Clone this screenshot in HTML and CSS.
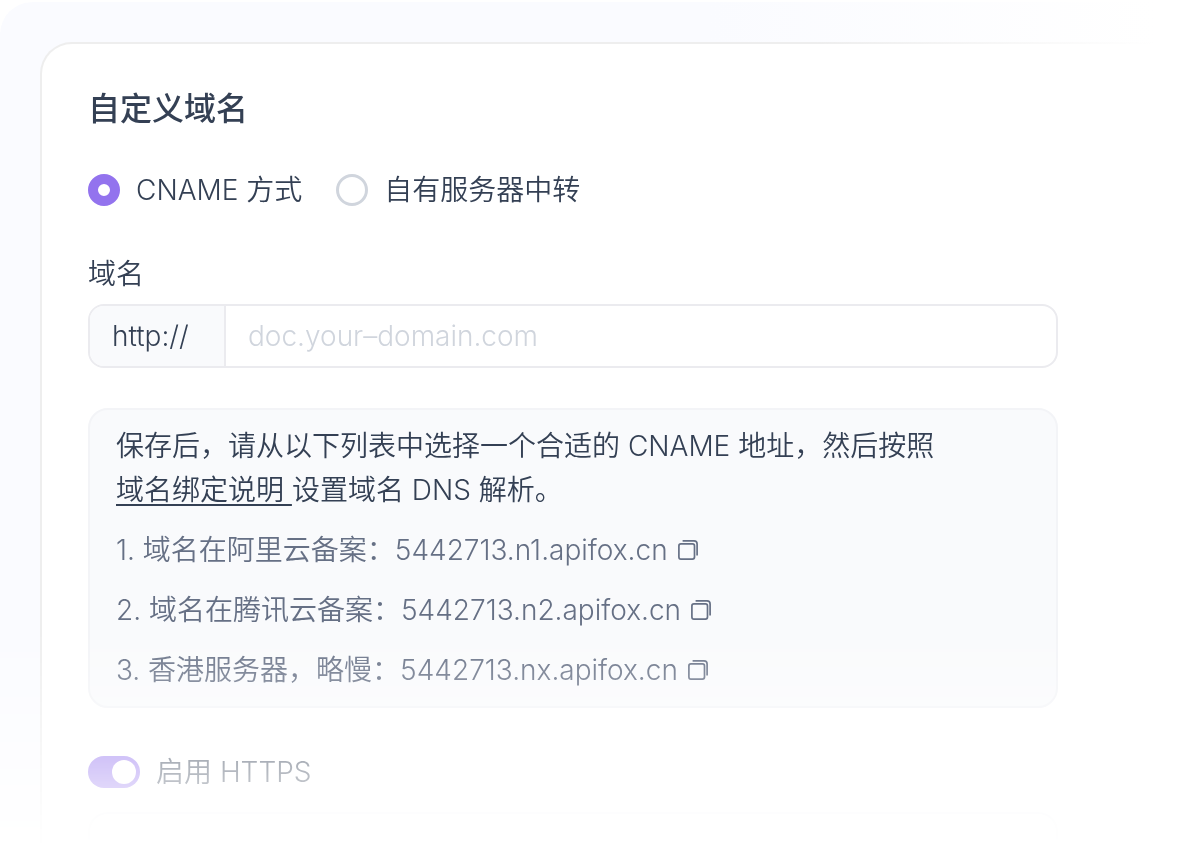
FILE: index.html
```html
<!DOCTYPE html>
<html lang="zh-CN">
<head>
  <meta charset="UTF-8">
  <meta name="viewport" content="width=device-width, initial-scale=1.0">
  <title>自定义域名</title>
  <link rel="stylesheet" href="styles.css">
</head>
<body>
  <main class="panel">
    <form class="card">
      <h2 class="title">自定义域名</h2>

      <div class="radio-group">
        <label class="radio-label"><input class="radio" type="radio" name="mode" checked>CNAME 方式</label>
        <label class="radio-label"><input class="radio" type="radio" name="mode">自有服务器中转</label>
      </div>

      <label class="field-label" for="domain">域名</label>
      <div class="input-group">
        <span class="prefix">http://</span>
        <input class="domain-input" type="text" id="domain" placeholder="doc.your–domain.com">
      </div>

      <div class="info">
        <p class="info-text">保存后，请从以下列表中选择一个合适的 CNAME 地址，然后按照<br><a class="info-link" href="#">域名绑定说明&nbsp;</a>设置域名 DNS 解析。</p>
        <ol class="address-list">
          <li class="address">
            <span>1. 域名在阿里云备案：5442713.n1.apifox.cn</span>
            <button class="copy" type="button" aria-label="复制">
              <svg width="20" height="20" viewBox="0 0 20 20" fill="none" stroke="currentColor" stroke-width="1.7"><rect x="0.9" y="3.9" width="15.6" height="15.2" rx="2"/><path d="M4.6 0.9H16a3.1 3.1 0 0 1 3.1 3.1v11.4"/></svg>
            </button>
          </li>
          <li class="address">
            <span>2. 域名在腾讯云备案：5442713.n2.apifox.cn</span>
            <button class="copy" type="button" aria-label="复制">
              <svg width="20" height="20" viewBox="0 0 20 20" fill="none" stroke="currentColor" stroke-width="1.7"><rect x="0.9" y="3.9" width="15.6" height="15.2" rx="2"/><path d="M4.6 0.9H16a3.1 3.1 0 0 1 3.1 3.1v11.4"/></svg>
            </button>
          </li>
          <li class="address">
            <span>3. 香港服务器，略慢：5442713.nx.apifox.cn</span>
            <button class="copy" type="button" aria-label="复制">
              <svg width="20" height="20" viewBox="0 0 20 20" fill="none" stroke="currentColor" stroke-width="1.7"><rect x="0.9" y="3.9" width="15.6" height="15.2" rx="2"/><path d="M4.6 0.9H16a3.1 3.1 0 0 1 3.1 3.1v11.4"/></svg>
            </button>
          </li>
        </ol>
      </div>

      <label class="switch-label"><input class="switch" type="checkbox" role="switch" checked>启用 HTTPS</label>

      <div class="next-box"></div>
    </form>
  </main>
</body>
</html>
```
FILE: styles.css
```css
* {
  box-sizing: border-box;
}

body {
  margin: 0;
  background-color: #fff;
  color: #344054;
  font-family: Inter, "Noto Sans CJK SC", sans-serif;
  font-size: 28px;
  font-weight: 350;
  line-height: 40px;
}

/* Fades to white on the right and at the bottom */
.panel {
  display: flex;
  min-height: calc(100vh - 2px);
  margin-top: 2px;
  padding: 40px 0 0 40px;
  border-radius: 32px 0 0 0;
  background: linear-gradient(to right, #fafbff 60%, #fff 98%);
  -webkit-mask-image: linear-gradient(to top, transparent 10px, rgba(0, 0, 0, 0.15) 45px, rgba(0, 0, 0, 0.35) 85px, rgba(0, 0, 0, 0.8) 185px, #000 230px);
  mask-image: linear-gradient(to top, transparent 10px, rgba(0, 0, 0, 0.15) 45px, rgba(0, 0, 0, 0.35) 85px, rgba(0, 0, 0, 0.8) 185px, #000 230px);
}

.card {
  display: flex;
  flex-direction: column;
  flex: 1;
  padding: 40px 122px 0 46px;
  border: 2px solid transparent;
  border-width: 2px 0 0 2px;
  border-radius: 32px 0 0 0;
  background: linear-gradient(#fff, #fff) padding-box, linear-gradient(to right, #eee 68%, #fff 98%) border-box;
}

.title {
  margin: 0;
  font-size: 32px;
  font-weight: 500;
  line-height: 50px;
}

.radio-group {
  display: flex;
  gap: 34px;
  margin-top: 36px;
}

.radio-label,
.switch-label {
  display: flex;
  align-items: center;
  gap: 16px;
}

.radio {
  appearance: none;
  width: 32px;
  height: 32px;
  margin: 0;
  border: 3px solid #d0d5dd;
  border-radius: 50%;
  background-color: #fff;
}

.radio:checked {
  border: 10px solid #9373ee;
}

.field-label {
  margin-top: 44px;
}

.input-group {
  display: flex;
  height: 64px;
  margin-top: 10px;
  border: 2px solid #ebebef;
  border-radius: 16px;
  background-color: #fff;
  overflow: hidden;
}

.prefix {
  min-width: 136px;
  padding: 10px 22px;
  border-right: 2px solid #ebebef;
  background-color: #f9fafc;
}

.domain-input {
  flex: 1;
  min-width: 0;
  padding: 0 22px;
  border: none;
  outline: none;
  background: none;
  color: inherit;
  font: inherit;
}

.domain-input::placeholder {
  color: #d0d5dd;
}

.info {
  margin-top: 40px;
  padding: 14px 26px;
  border: 2px solid #f3f4f7;
  border-radius: 20px;
  background-color: #f9fafc;
  line-height: 44px;
}

.info-text {
  margin: 0;
}

.info-link {
  color: inherit;
  text-decoration: underline;
  text-decoration-thickness: 2px;
  text-underline-offset: 4px;
}

.address-list {
  display: flex;
  flex-direction: column;
  gap: 16px;
  margin: 16px 0 0;
  padding: 0;
  list-style: none;
  color: #667085;
}

.address {
  display: flex;
  align-items: center;
  gap: 10px;
}

.copy {
  display: flex;
  padding: 0;
  border: none;
  background: none;
  color: inherit;
  cursor: pointer;
}

.switch-label {
  margin-top: 44px;
}

.switch {
  appearance: none;
  display: flex;
  justify-content: flex-end;
  width: 52px;
  height: 32px;
  margin: 0;
  padding: 4px;
  border-radius: 16px;
  background-color: #9373ee;
}

.switch::before {
  content: "";
  width: 24px;
  height: 24px;
  border-radius: 50%;
  background-color: #fff;
}

.next-box {
  flex: 1;
  margin-top: 20px;
  border: 2px solid #f3f4f7;
  border-bottom: none;
  border-radius: 20px 20px 0 0;
}
```
